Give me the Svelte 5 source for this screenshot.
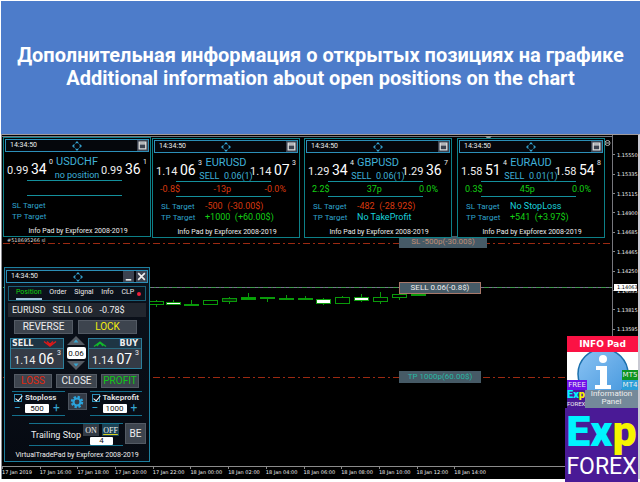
<script>
  const cards = [
    { x: 1, y: 2, symbol: 'USDCHF', status: 'no position', bid: ['0.99', '34', '0'], ask: ['0.99', '36', '1'], stats: [], tone: '', sl: '', slTone: '', tp: '', tpTone: '' },
    { x: 150, y: 3, symbol: 'EURUSD', status: 'SELL  0.06(1)', bid: ['1.14', '06', '3'], ask: ['1.14', '07', '3'], stats: ['-0.8$', '-13p', '-0.0%'], tone: 'loss', sl: '-500  (-30.00$)', slTone: 'loss', tp: '+1000  (+60.00$)', tpTone: 'gain' },
    { x: 302, y: 3, symbol: 'GBPUSD', status: 'SELL  0.06(1)', bid: ['1.29', '34', '4'], ask: ['1.29', '36', '7'], stats: ['2.2$', '37p', '0.0%'], tone: 'gain', sl: '-482  (-28.92$)', slTone: 'loss', tp: 'No TakeProfit', tpTone: 'none' },
    { x: 455, y: 3, symbol: 'EURAUD', status: 'SELL  0.01(1)', bid: ['1.58', '51', '4'], ask: ['1.58', '54', '8'], stats: ['0.3$', '45p', '0.0%'], tone: 'gain', sl: 'No StopLoss', slTone: 'none', tp: '+541  (+3.97$)', tpTone: 'gain' }
  ];
  const prices = ['1.15550', '1.15335', '1.15115', '1.14900', '1.14685', '1.14465', '1.14250', '1.14035', '1.13815', '1.13595'];
  const times = ['17 Jan 2019', '17 Jan 16:00', '17 Jan 18:00', '17 Jan 20:00', '17 Jan 22:00', '18 Jan 00:00', '18 Jan 02:00', '18 Jan 04:00', '18 Jan 06:00', '18 Jan 08:00', '18 Jan 10:00', '18 Jan 12:00', '18 Jan 14:00'];
  // x, body top, body height, wick top, wick bottom, fill
  const candles = [
    [147, 166, 3, 165, 172, '#000'], [164, 167, 2, 165, 170, '#fff'], [182, 169, 1, 165, 170, '#0a0'],
    [201, 165, 4, 165, 169, '#000'], [220, 163, 3, 162, 169, '#063006'], [239, 162, 2, 158, 165, '#0a0'],
    [258, 162, 1, 162, 167, '#0a0'], [277, 163, 1, 160, 164, '#0a0'], [296, 163, 1, 161, 164, '#050'],
    [314, 164, 4, 163, 170, '#fff'], [333, 162, 6, 161, 168, '#000'], [352, 162, 3, 159, 167, '#fff'],
    [371, 162, 4, 157, 169, '#000'], [390, 159, 3, 159, 165, '#000'], [409, 159, 1, 158, 160, '#0a0']
  ];
  const tabs = ['Position', 'Order', 'Signal', 'Info', 'CLP'];
  let active = $state('Position');
  let volume = $state('0.06');
  let useSl = $state(true);
  let useTp = $state(true);
  let sl = $state('500');
  let tp = $state('1000');
  let trail = $state('4');
</script>

{#snippet move()}
  <svg class="move" viewBox="0 0 10 10" aria-hidden="true">
    <path d="M3.5 2.5 5 .8l1.500 1.700M3.500 7.500 5 9.200l1.500-1.700M2.500 3.500.8 5l1.700 1.500M7.500 3.500 9.200 5 7.500 6.500" fill="none" stroke="#35a5d2" stroke-width="1.100" />
  </svg>
{/snippet}

{#snippet quote(parts)}
  <div class="quote"><span>{parts[0]}</span><b>{parts[1]}</b><sup>{parts[2]}</sup></div>
{/snippet}

<div class="page">
  <header>
    <h1>Дополнительная информация о открытых позициях на графике<br />Additional information about open positions on the chart</h1>
  </header>

  <main>
    <section class="plot">
      <svg class="lines" width="100%" height="100%" aria-hidden="true">
        <line x1="0" x2="100%" y1="1.500" y2="1.500" stroke="#77777d" />
        <line x1="1" x2="100%" y1="108.500" y2="108.500" stroke="#9c2a12" stroke-dasharray="7 3 2 3" />
        <line x1="1" x2="100%" y1="242.500" y2="242.500" stroke="#9c2a12" stroke-dasharray="7 3 2 3" />
        <line x1="1" x2="100%" y1="152.500" y2="152.500" stroke="#77718e" />
        <line x1="1" x2="100%" y1="152.500" y2="152.500" stroke="#3f9a4c" stroke-dasharray="5 3 2 3" />
        {#each candles as [x, top, h, w1, w2, fill]}
          <line x1={x + 7.5} x2={x + 7.5} y1={w1} y2={w2} stroke="#0a9a0a" />
          <rect x={x + 0.5} y={top + 0.5} width="14" height={h} {fill} stroke="#0a9a0a" />
        {/each}
        <path d="M483 1h7l-3.500 4z" fill="#999" />
        <circle cx="605.500" cy="8" r="2.500" fill="none" stroke="#bbb" />
        <path d="M604 8h3" stroke="#bbb" />
      </svg>
      <span class="order">#518695266 sl</span>
      <span class="tag sl">SL -500p(-30.00$)</span>
      <span class="tag sell">SELL 0.06(-0.8$)</span>
      <span class="tag tp">TP 1000p(60.00$)</span>

      {#each cards as c}
        <article class="card" style:left="{c.x}px" style:top="{c.y}px">
          <div class="bar"><time>14:34:50</time>{@render move()}
            <button class="max" aria-label="Maximize"><svg viewBox="0 0 10 10"><path d="M2 2h6v6H2zM2 3.500h6" fill="none" stroke="#ddd" stroke-width="1.200" /></svg></button>
          </div>
          <div class="head">
            {@render quote(c.bid)}
            <div class="pair"><h2>{c.symbol}</h2><p>{c.status}</p></div>
            {@render quote(c.ask)}
          </div>
          <div class="rule"></div>
          <div class="stats {c.tone}">{#each c.stats as s}<span>{s}</span>{/each}</div>
          <div class="rule"></div>
          <dl>
            <dt>SL Target</dt><dd class={c.slTone}>{c.sl}</dd>
            <dt>TP Target</dt><dd class={c.tpTone}>{c.tp}</dd>
          </dl>
          <footer>Info Pad by Expforex 2008-2019</footer>
        </article>
      {/each}

      <section class="pad">
        <div class="bar"><time>14:34:50</time>{@render move()}
          <span class="win">
            <button aria-label="Minimize"><svg viewBox="0 0 10 10"><path d="M2.500 8h5" stroke="#eee" stroke-width="1.500" /></svg></button>
            <button aria-label="Close"><svg viewBox="0 0 10 10"><path d="m2 2 6 6M8 2 2 8" stroke="#eee" stroke-width="1.500" /></svg></button>
          </span>
        </div>
        <nav>
          {#each tabs as t}<button class:on={active === t} onclick={() => (active = t)}>{t}</button>{/each}
          <i></i>
        </nav>
        <div class="strip"><span>EURUSD</span><span>SELL 0.06</span><span>-0.78$</span></div>
        <div class="two"><button class="btn">REVERSE</button><button class="btn yellow">LOCK</button></div>
        <div class="deal">
          <button class="side">
            <span class="top"><strong>SELL</strong><svg viewBox="0 0 14 8"><path d="M1 1.500 7 6l6-4.500M4 1.500l3 3 3-3" fill="none" stroke="#e01818" stroke-width="1.400" /></svg></span>
            {@render quote(['1.14', '06', '3'])}
          </button>
          <div class="lot">
            <button aria-label="Increase volume"><svg viewBox="0 0 18 9"><path d="M9 0l9 9H0z" fill="#555b63" /><path d="M9 3.500l2.500 3h-5z" fill="#35a5d2" /></svg></button>
            <input aria-label="Volume" bind:value={volume} />
            <button aria-label="Decrease volume"><svg viewBox="0 0 18 9"><path d="M9 9l9-9H0z" fill="#555b63" /><path d="M9 5.500l2.500-3h-5z" fill="#35a5d2" /></svg></button>
          </div>
          <button class="side buy">
            <span class="top"><svg viewBox="0 0 14 8"><path d="M1 6.500 7 2l6 4.500M4 6l3-3.500L10 6" fill="none" stroke="#12b82a" stroke-width="1.200" /></svg><strong>BUY</strong></span>
            {@render quote(['1.14', '07', '3'])}
          </button>
        </div>
        <div class="three"><button class="btn loss">LOSS</button><button class="btn">CLOSE</button><button class="btn gain">PROFIT</button></div>
        <div class="limits">
          <div class="limit">
            <label><input type="checkbox" bind:checked={useSl} />Stoploss</label>
            <div class="step"><button aria-label="Decrease stop loss">−</button><input aria-label="Stop loss points" bind:value={sl} /><button aria-label="Increase stop loss">+</button></div>
          </div>
          <button class="gear" aria-label="Settings"><svg viewBox="0 0 16 16"><circle cx="8" cy="8" r="5.800" fill="none" stroke="#2ba4dc" stroke-width="2.600" stroke-dasharray="2.600 1.955" /><circle cx="8" cy="8" r="4" fill="none" stroke="#2ba4dc" stroke-width="2.400" /></svg></button>
          <div class="limit">
            <label><input type="checkbox" bind:checked={useTp} />Takeprofit</label>
            <div class="step"><button aria-label="Decrease take profit">−</button><input aria-label="Take profit points" bind:value={tp} /><button aria-label="Increase take profit">+</button></div>
          </div>
        </div>
        <div class="trail">
          <div class="box">
            <label for="trail">Trailing Stop</label>
            <div class="sw"><button>ON</button><button class="off">OFF</button><input id="trail" bind:value={trail} /></div>
          </div>
          <button class="btn be">BE</button>
        </div>
        <footer>VirtualTradePad by Expforex 2008-2019</footer>
      </section>
    </section>

    <aside class="prices">
      {#each prices as p}<span>{p}</span>{/each}
      <mark>1.14063</mark>
    </aside>
    <div class="times">{#each times as t}<span>{t}</span>{/each}</div>
  </main>

  <div class="brand">
    <div class="info">
      <h3>INFO Pad</h3>
      <svg class="ball" viewBox="0 0 71 56" aria-hidden="true">
        <defs><linearGradient id="g" x1="0" y1="0" x2="1" y2="1"><stop offset="0" stop-color="#8cc4f4" /><stop offset="1" stop-color="#4295dc" /></linearGradient></defs>
        <circle cx="36" cy="22" r="25" fill="url(#g)" stroke="#1b70ad" stroke-width="1.500" />
        <circle cx="36" cy="7" r="4" fill="#fff" />
        <path d="M29 14h11v19h4v4H28v-4h5V18h-4z" fill="#fff" />
      </svg>
      <span class="chip mt5">MT5</span>
      <span class="chip mt4">MT4</span>
      <span class="chip free">FREE</span>
      <div class="under">
        <div class="mini"><div><span class="cy">Ex</span><span class="ye">p</span></div><small>FOREX</small></div>
        <p>Information<br />Panel</p>
      </div>
    </div>
    <div class="logo"><div class="exp"><span class="cy">Ex</span><span class="ye">p</span></div><div class="fx">FOREX</div></div>
  </div>
</div>

<style>
  :global(body) { margin: 0; background: #fff; }
  .page, .page * { box-sizing: border-box; }
  .page { position: relative; min-height: 100vh; display: flex; flex-direction: column; padding: 1px 0 3px 1px; font-family: Roboto, "Liberation Sans", sans-serif; color: #eee; overflow: hidden; }
  h1, h2, h3, p, dl, dd { margin: 0; font-weight: 400; }
  button, input { font: inherit; color: inherit; margin: 0; padding: 0; border: 0; background: none; min-width: 0; }
  svg { display: block; }
  header { height: 133px; background: #4d7cca; display: flex; justify-content: center; }
  h1 { padding-top: 43px; font-size: 20px; line-height: 23px; font-weight: 700; text-align: center; color: #fff; white-space: nowrap; }
  main { flex: 1; display: grid; grid-template-columns: 1fr 25px; grid-template-rows: 1fr 12px; background: #000; border-top: 1px solid #a09a9c; border-left: 1px solid #8b8b91; border-right: 2px solid #c9c9d2; }
  .plot { position: relative; border-right: 1px solid #77777d; border-bottom: 1px solid #8b8b8b; }
  .lines { position: absolute; inset: 0; }
  .order { position: absolute; left: 5px; top: 102px; font: 5px/6px "DejaVu Sans", sans-serif; color: #ddd; }
  .tag { position: absolute; left: 397px; height: 12px; line-height: 12px; font-size: 8px; text-align: center; background: #465a66; width: 82px; }
  .tag.sl { top: 101px; width: 88px; color: #c08f74; }
  .tag.sell { top: 147px; line-height: 10px; border: 1px solid #a8786a; color: #eee; }
  .tag.tp { top: 236px; color: #27b8a4; }

  .card { position: absolute; width: 148px; height: 100px; padding: 1px; border: 1px solid #0d8088; background: #000; font-size: 9px; line-height: 11px; }
  .bar { position: relative; height: 13px; border: 1px solid #2c8fb8; display: flex; align-items: center; justify-content: space-between; padding: 0 0 0 4px; background: #05070c; }
  time { font-size: 7px; line-height: 11px; }
  .move { position: absolute; left: 66px; top: 1px; width: 10px; height: 10px; }
  .max { width: 11px; height: 11px; background: #3b4250; }
  .head { display: grid; grid-template-columns: 46px minmax(0, 1fr) 46px; padding: 3px 2px 0; height: 28px; }
  .quote { display: flex; align-items: baseline; justify-content: space-between; font-size: 11px; line-height: 22px; color: #eee; height: 24px; }
  .head .quote { padding-top: 3px; }
  .quote b { font-size: 14px; font-weight: 400; color: #fff; }
  .quote sup { font-size: 7px; line-height: 7px; align-self: flex-start; padding-top: 1px; }
  .pair { display: flex; flex-direction: column; align-items: center; white-space: pre; color: #3fb0d8; }
  h2 { font-size: 11px; line-height: 14px; }
  .pair p { font-size: 9px; line-height: 12px; }
  .rule { height: 1px; margin: 0 27px 0 22px; background: #14909c; }
  .stats { height: 14px; line-height: 15px; padding: 0 12px 0 6px; display: flex; justify-content: space-between; }
  .loss { color: #d8380e; }
  .gain { color: #14cf14; }
  .none { color: #19d2dc; }
  dl { display: grid; grid-template-columns: 44px 1fr; padding: 4px 0 0 7px; height: 26px; white-space: pre; }
  dt { font-size: 8px; color: #2fa3cc; }
  .card footer { margin-top: 5px; text-align: center; font-size: 7px; line-height: 9px; padding-left: 2px; }

  .pad { position: absolute; left: 2px; top: 132px; width: 146px; height: 195px; padding: 2px 1px 0; border: 1px solid #1d7f9e; background: linear-gradient(#0c121c, #060a12); font-size: 9px; display: flex; flex-direction: column; }
  .pad .bar { flex: none; }
  .win { display: flex; gap: 2px; }
  .win button { width: 11px; height: 11px; background: #3b4250; }
  nav { display: flex; align-items: center; justify-content: space-between; height: 15px; margin: 3px 2px 0; padding: 0 4px 0 7px; border: 1px solid #195f78; font-size: 7px; }
  nav button { height: 13px; border-bottom: 2px solid transparent; line-height: 11px; }
  nav .on { color: #12d512; border-bottom-color: #9fc4de; }
  nav i { width: 4px; height: 4px; margin-left: -5px; border-radius: 50%; background: #f0203a; }
  .strip { display: flex; gap: 7px; height: 14px; margin: 2px 2px 0; padding-left: 4px; line-height: 14px; background: #22272f; }
  .btn { height: 14px; line-height: 12px; font-size: 10px; background: #3d444e; border: 1px solid #535a64; color: #eee; }
  .two { display: grid; grid-template-columns: 1fr 1fr; gap: 5px; margin: 3px 11px 0 8px; }
  .btn.yellow { color: #f3ee10; }
  .btn.loss { color: #e0280e; }
  .btn.gain { color: #10c818; }
  .deal { display: grid; grid-template-columns: 1fr 20px 1fr; gap: 2px; margin: 4px 6px 0 4px; height: 32px; }
  .side { border: 1px solid #2c7f9c; background: #343b46; display: block; height: 31px; overflow: hidden; }
  .top { display: flex; align-items: center; justify-content: space-between; height: 10px; padding: 0 3px 0 1px; background: #1e3544; border-bottom: 1px solid #2c6a80; }
  .top svg { width: 14px; height: 8px; margin: 0 3px; }
  .top strong { font: 700 8px/9px "DejaVu Sans", sans-serif; }
  .side .quote { height: 19px; line-height: 20px; padding: 0 2px 0 3px; }
  .lot { display: flex; flex-direction: column; align-items: center; margin: -2px 0 0; height: 34px; }
  .lot svg { width: 18px; height: 9px; }
  .lot button { height: 9px; }
  .lot input { width: 19px; height: 12px; margin: 2px 0; border-radius: 2px; background: #fff; color: #111; font-size: 8px; text-align: center; }
  .three { display: grid; grid-template-columns: 38px 1fr 38px; gap: 4px; margin: 4px 9px 0 8px; }
  .limits { display: grid; grid-template-columns: 1fr 19px 1fr; gap: 3px; margin: 3px 6px 0 6px; height: 25px; }
  .limit { border: solid #14708c; border-width: 1px 0; padding: 1px 0 0 2px; }
  .limit label { display: flex; align-items: center; gap: 3px; height: 10px; font-size: 8px; line-height: 10px; font-weight: 700; color: #ddd; }
  .limit [type="checkbox"] { appearance: none; width: 8px; height: 8px; border: 1px solid #2c8fb8; position: relative; flex: none; }
  .limit [type="checkbox"]:checked::after { content: ""; position: absolute; left: 2px; top: -1px; width: 3px; height: 6px; border: solid #fff; border-width: 0 1px 1px 0; transform: rotate(40deg); }
  .step { display: flex; align-items: center; gap: 4px; height: 10px; }
  .step button { width: 7px; font-size: 12px; line-height: 10px; color: #35a5d2; }
  .step input { width: 24px; height: 9px; border-radius: 1px; background: #fff; color: #111; font-size: 8px; line-height: 9px; text-align: center; }
  .gear { height: 17px; margin-top: 2px; background: #343b46; border: 1px solid #4b535e; display: flex; align-items: center; justify-content: center; }
  .gear svg { width: 14px; height: 14px; }
  .trail { display: flex; justify-content: space-between; margin: 7px 2px 0 23px; }
  .box { width: 94px; height: 23px; border: solid #14708c; border-width: 1px 0; padding-left: 2px; display: flex; }
  .box label { font-size: 9px; line-height: 22px; white-space: nowrap; flex: 1; }
  .sw { display: grid; grid-template-columns: 16px 17px; gap: 0 3px; width: 40px; }
  .sw button { height: 12px; background: #333a44; font: 8px/11px "Liberation Serif", serif; }
  .sw .off { background: #1c4254; text-decoration: underline #d8d020; }
  .sw input { grid-column: 1 / 3; margin-left: 7px; width: 23px; height: 8px; background: #fff; color: #111; font-size: 8px; text-align: center; border-radius: 1px; }
  .be { width: 21px; height: 21px; }
  .pad footer { margin-top: auto; padding-bottom: 1px; font-size: 7px; line-height: 9px; text-align: center; white-space: nowrap; }

  .prices { position: relative; display: flex; flex-direction: column; height: 194px; margin-top: 10px; font: 5px/6px "DejaVu Sans", sans-serif; }
  .prices span { flex: 1; display: flex; align-items: center; gap: 2px; }
  .prices span::before { content: ""; width: 2px; height: 1px; background: #888; }
  .prices mark { position: absolute; left: 1px; top: 139px; width: 23px; height: 7px; line-height: 7px; padding-left: 3px; background: #fff; color: #000; }
  .times { grid-column: 1 / 3; display: flex; width: 490px; font: 5px/6px "DejaVu Sans", sans-serif; }
  .times span { flex: 1; white-space: nowrap; padding-top: 2px; }
  .times span::before { content: ""; display: block; width: 1px; height: 2px; margin-top: -2px; background: #888; }

  .brand { position: absolute; right: 2px; bottom: 0; width: 73px; }
  .info { position: relative; margin-left: 2px; height: 72px; background: #fff; }
  h3 { height: 16px; background: #fb1244; font: 700 9px/16px "DejaVu Sans", sans-serif; text-align: center; color: #fff; }
  .ball { width: 71px; height: 56px; }
  .chip { position: absolute; font: 7px/10px "DejaVu Sans", sans-serif; height: 10px; text-align: center; width: 16px; }
  .mt5 { right: 0; top: 34px; background: #0d9420; }
  .mt4 { right: 0; top: 44px; background: #2b9fd8; }
  .free { left: 0; top: 44px; width: 20px; background: #7012ea; }
  .under { position: absolute; left: 0; right: 0; bottom: 0; height: 18px; display: flex; background: #4a1a96; text-align: center; }
  .mini { width: 18px; font-weight: 900; font-size: 11px; line-height: 10px; }
  .mini small { display: block; font-size: 6px; line-height: 7px; font-weight: 400; }
  .under p { flex: 1; background: #74899a; font-size: 8px; line-height: 8px; }
  .cy { color: #00f4ff; }
  .ye { color: #f6f600; }
  .logo { height: 74px; background: #4a1a96; text-align: center; color: #fff; }
  .exp { font-weight: 900; font-size: 43px; line-height: 46px; height: 46px; }
  .fx { font-size: 23px; line-height: 26px; font-weight: 400; }
</style>
